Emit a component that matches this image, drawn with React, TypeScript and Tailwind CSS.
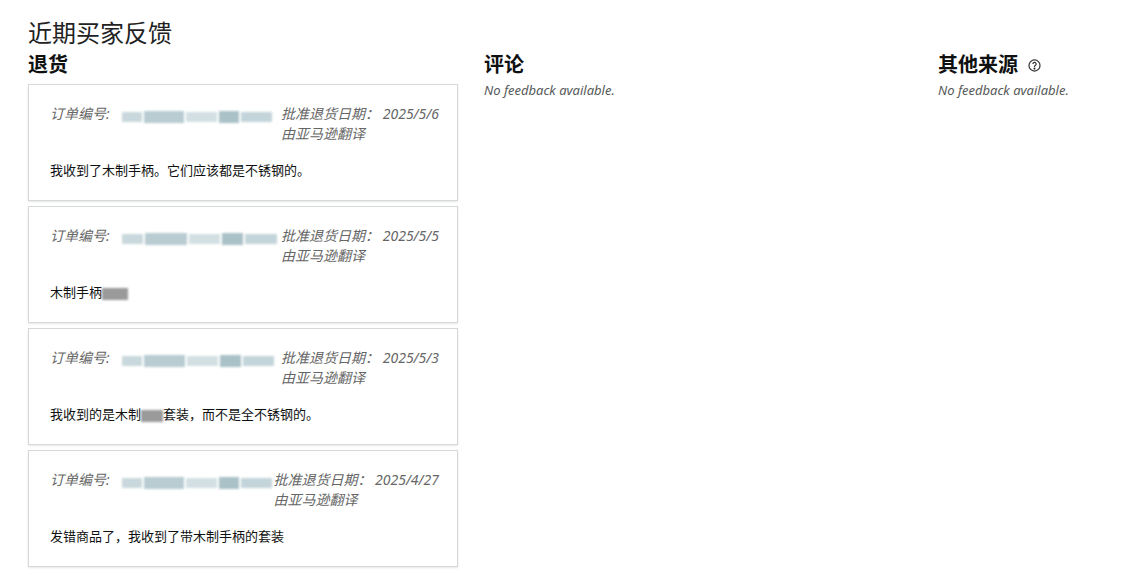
import React from "react";

const Blur = ({ w }: { w: number }) => (
  <span className="inline-flex h-[14px] items-center gap-[2px] blur-[1px]" style={{ width: w }}>
    <span className="h-[10px] flex-1 bg-[#c9d8dc]" />
    <span className="h-[12px] flex-[2] bg-[#b8ccd2]" />
    <span className="h-[10px] flex-[1.5] bg-[#d3e0e3]" />
    <span className="h-[12px] flex-1 bg-[#a9c1c7]" />
    <span className="h-[10px] flex-[1.5] bg-[#c3d5da]" />
  </span>
);

const GrayBlur = ({ w }: { w: number }) => (
  <span className="inline-block h-[12px] bg-[#9a9a9a] blur-[1px] align-middle" style={{ width: w }} />
);

const cards: { w: number; date: string; body: React.ReactNode }[] = [
  { w: 150, date: "2025/5/6", body: "我收到了木制手柄。它们应该都是不锈钢的。" },
  { w: 155, date: "2025/5/5", body: <>木制手柄<GrayBlur w={26} /></> },
  { w: 152, date: "2025/5/3", body: <>我收到的是木制<GrayBlur w={22} />套装，而不是全不锈钢的。</> },
  { w: 150, date: "2025/4/27", body: "发错商品了，我收到了带木制手柄的套装" },
];

export default function App() {
  const font = { fontFamily: '"Noto Sans","Noto Sans CJK SC",sans-serif' };
  return (
    <div className="bg-white text-[#0f1111] px-[28px] pt-[16px] w-[1142px] h-[582px]" style={font}>
      <h1 className="text-[24px] leading-[34px] text-[#222]">近期买家反馈</h1>
      <div className="flex gap-[26px]">
        <div className="w-[430px]">
          <h2 className="text-[20px] font-bold leading-[30px]">退货</h2>
          <div className="mt-[4px] flex flex-col gap-[5px]">
            {cards.map((c, i) => (
              <div key={i} className="h-[117px] border border-[#d5d9d9] shadow-[0_1px_2px_rgba(0,0,0,0.1)] pl-[21px] pr-[18px] pt-[19px]">
                <div className="flex justify-between text-[14px] italic text-[#666] leading-[20px]">
                  <div className="flex items-start gap-[12px]">
                    <span>订单编号:</span>
                    <span className="mt-[3px]"><Blur w={c.w} /></span>
                  </div>
                  <div>
                    <div>批准退货日期： {c.date}</div>
                    <div>由亚马逊翻译</div>
                  </div>
                </div>
                <div className="mt-[16px] text-[13px] leading-[20px] text-[#0f1111]">{c.body}</div>
              </div>
            ))}
          </div>
        </div>
        <div className="w-[428px]">
          <h2 className="text-[20px] font-bold leading-[30px]">评论</h2>
          <p className="text-[13px] italic text-[#565959] leading-[18px] mt-[1px]">No feedback available.</p>
        </div>
        <div>
          <h2 className="text-[20px] font-bold leading-[30px] flex items-center gap-[10px]">
            其他来源
            <svg width="13" height="13" viewBox="0 0 16 16" fill="none" stroke="#333" strokeWidth="1.5">
              <circle cx="8" cy="8" r="6.8" />
              <path d="M6 6.2a2 2 0 1 1 2.8 1.8c-.6.3-.8.7-.8 1.3v.4" />
              <circle cx="8" cy="11.8" r=".6" fill="#333" />
            </svg>
          </h2>
          <p className="text-[13px] italic text-[#565959] leading-[18px] mt-[1px]">No feedback available.</p>
        </div>
      </div>
    </div>
  );
}
